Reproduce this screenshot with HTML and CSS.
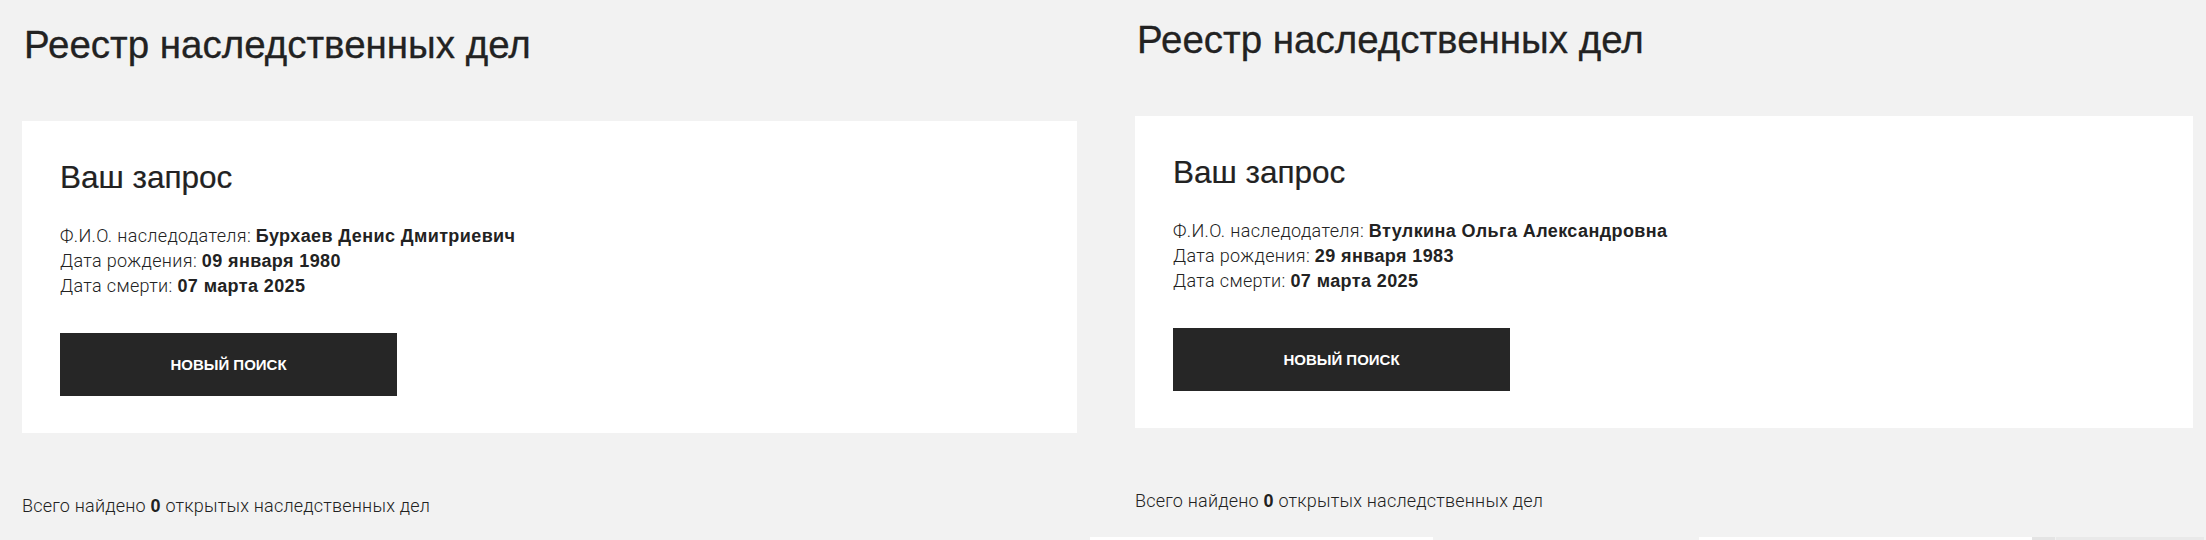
FILE: index.html
```html
<!DOCTYPE html>
<html lang="ru">

<head>
    <meta charset="UTF-8">
    <meta name="viewport" content="width=device-width, initial-scale=1.0">
    <title>Реестр наследственных дел</title>
    <link rel="stylesheet" href="styles.css">
</head>

<body>
    <div class="screens">
        <main class="registry registry-left">
            <h1>Реестр наследственных дел</h1>
            <section class="request">
                <h2>Ваш запрос</h2>
                <ul class="request-info">
                    <li>Ф.И.О. наследодателя: <b>Бурхаев Денис Дмитриевич</b></li>
                    <li>Дата рождения: <b>09 января 1980</b></li>
                    <li>Дата смерти: <b>07 марта 2025</b></li>
                </ul>
                <a class="btn" href="#">Новый поиск</a>
            </section>
            <p class="total">Всего найдено <b>0</b> открытых наследственных дел</p>
        </main>

        <main class="registry registry-right">
            <h1>Реестр наследственных дел</h1>
            <section class="request">
                <h2>Ваш запрос</h2>
                <ul class="request-info">
                    <li>Ф.И.О. наследодателя: <b>Втулкина Ольга Александровна</b></li>
                    <li>Дата рождения: <b>29 января 1983</b></li>
                    <li>Дата смерти: <b>07 марта 2025</b></li>
                </ul>
                <a class="btn" href="#">Новый поиск</a>
            </section>
            <p class="total">Всего найдено <b>0</b> открытых наследственных дел</p>
            <div class="next-row">
                <span class="strip strip-white"></span>
                <span class="strip strip-white strip-wide"></span>
                <span class="strip strip-grey"></span>
                <span class="strip strip-grey strip-last"></span>
            </div>
        </main>
    </div>
</body>

</html>
```

FILE: styles.css
```css
/* General styling */
* {
    margin: 0;
    padding: 0;
    box-sizing: border-box;
}

body {
    height: 540px;
    overflow: hidden;
    background-color: #f2f2f2;
    color: #222;
    font-family: "Liberation Sans", Arial, sans-serif;
}

.screens {
    display: flex;
}

/* One registry page */
.registry {
    display: flex;
    flex-direction: column;
    align-items: flex-start;
    padding: 24px 0 0 22px;
}

.registry-left {
    width: 1113px;
}

.registry-left .request {
    width: 1055px;
}

.registry-right {
    width: 1093px;
    margin-top: -5px;
}

.registry-right .request {
    width: 1058px;
}

h1 {
    font-size: 38.5px;
    font-weight: normal;
    line-height: 42px;
    padding-left: 2px;
    margin-bottom: 55px;
    -webkit-text-stroke: 0.3px currentColor;
}

/* Request card */
.request {
    background-color: #fff;
    padding: 38px 38px 37px;
}

h2 {
    font-size: 31.5px;
    font-weight: normal;
    line-height: 36px;
    margin-bottom: 28px;
    -webkit-text-stroke: 0.2px currentColor;
}

.request-info,
.total {
    list-style: none;
    font-family: Roboto, "Liberation Sans", sans-serif;
    font-weight: 300;
    font-size: 18px;
    line-height: 25px;
    letter-spacing: 0.2px;
    color: #222;
}

.request-info {
    letter-spacing: 0.35px;
    margin-bottom: 35px;
}

.request-info li {
    height: 25px;
}

.request-info b,
.total b {
    font-family: "Liberation Sans", Arial, sans-serif;
    font-weight: bold;
    line-height: 1;
    letter-spacing: 0.4px;
}

.btn {
    display: flex;
    align-items: center;
    justify-content: center;
    width: 337px;
    height: 63px;
    background-color: #262626;
    color: #fff;
    font-size: 15px;
    font-weight: bold;
    text-transform: uppercase;
    text-decoration: none;
}

.total {
    margin-top: 60px;
}

/* Top of the next block, cut off by the window */
.next-row {
    display: flex;
    margin: 24px 0 0 -45px;
}

.strip {
    height: 10px;
}

.strip-white {
    width: 343px;
    background-color: #fff;
}

.strip-wide {
    width: 333px;
    margin-left: 266px;
}

.strip-grey {
    width: 23px;
    background-color: #e4e4e4;
}

.strip-last {
    width: 148px;
    margin-left: 1px;
    background-color: #e9e9e9;
}
```
